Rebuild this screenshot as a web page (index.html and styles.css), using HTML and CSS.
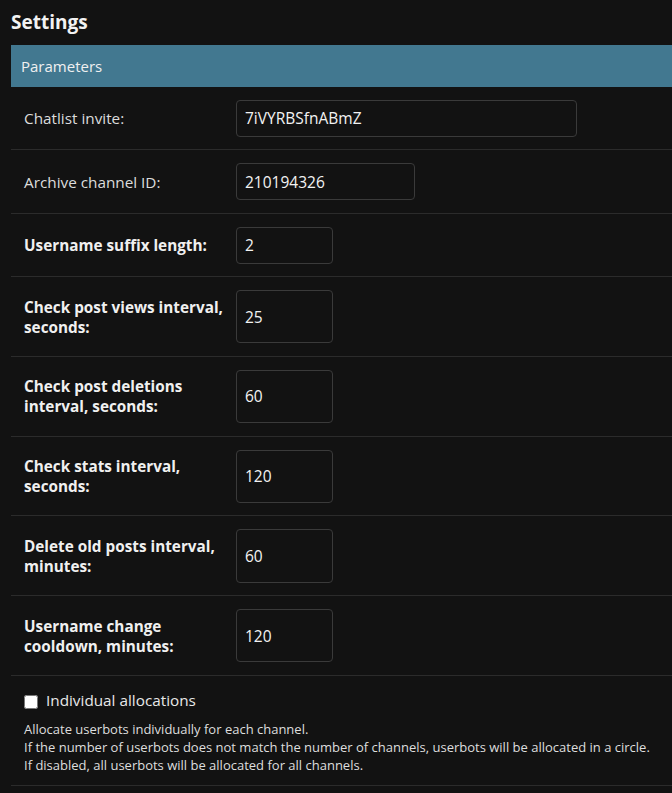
FILE: index.html
```html
<!DOCTYPE html>
<html lang="en">
<head>
<meta charset="utf-8">
<title>Settings</title>
<link rel="stylesheet" href="styles.css">
</head>
<body>
<div class="content">
  <h1 class="title">Settings</h1>
  <fieldset class="module">
    <h2 class="caption">Parameters</h2>
    <div class="form-row">
      <label class="lbl">Chatlist invite:</label>
      <input class="inp w-lg" type="text" value="7iVYRBSfnABmZ">
    </div>
    <div class="form-row">
      <label class="lbl">Archive channel ID:</label>
      <input class="inp w-md" type="text" value="210194326">
    </div>
    <div class="form-row">
      <label class="lbl req">Username suffix length:</label>
      <input class="inp w-sm" type="text" value="2">
    </div>
    <div class="form-row">
      <label class="lbl req">Check post views interval, seconds:</label>
      <input class="inp w-sm" type="text" value="25">
    </div>
    <div class="form-row">
      <label class="lbl req">Check post deletions interval, seconds:</label>
      <input class="inp w-sm" type="text" value="60">
    </div>
    <div class="form-row">
      <label class="lbl req">Check stats interval, seconds:</label>
      <input class="inp w-sm" type="text" value="120">
    </div>
    <div class="form-row">
      <label class="lbl req">Delete old posts interval, minutes:</label>
      <input class="inp w-sm" type="text" value="60">
    </div>
    <div class="form-row">
      <label class="lbl req">Username change cooldown, minutes:</label>
      <input class="inp w-sm" type="text" value="120">
    </div>
    <div class="form-row check-row">
      <div class="check-line">
        <input class="chk" type="checkbox" id="ia">
        <label class="chk-lbl" for="ia">Individual allocations</label>
      </div>
      <div class="help">
        Allocate userbots individually for each channel.<br>
        If the number of userbots does not match the number of channels, userbots will be allocated in a circle.<br>
        If disabled, all userbots will be allocated for all channels.
      </div>
    </div>
  </fieldset>
</div>
</body>
</html>
```
FILE: styles.css
```css
html, body {
  margin: 0;
  padding: 0;
  background: #121212;
  color: #eeeeee;
  font-family: "Open Sans", "Noto Sans", sans-serif;
}

.content {
  padding: 0 0 0 11px;
}

.title {
  margin: 0;
  padding: 9px 0 0 0;
  height: 36px;
  font-size: 19px;
  font-weight: 700;
  line-height: 27px;
  color: #f2f2f2;
}

.module {
  margin: 0;
  padding: 0;
  border: none;
  min-width: 0;
}

.caption {
  margin: 0;
  height: 42px;
  display: flex;
  align-items: center;
  padding: 0 10px;
  background: #427890;
  color: #f0f0f0;
  font-size: 15px;
  font-weight: 400;
}

.form-row {
  display: flex;
  align-items: center;
  padding: 12.8px 0 12.6px 13px;
  border-bottom: 1px solid #2b2b2b;
}

.lbl {
  flex: 0 0 auto;
  width: 200px;
  margin-right: 12px;
  padding: 6.7px 0;
  font-size: 15.3px;
  line-height: 20px;
  color: #dcdcdc;
}

.lbl.req {
  font-weight: 700;
  color: #f0f0f0;
}

.inp {
  align-self: stretch;
  box-sizing: border-box;
  min-height: 37px;
  margin: 0;
  padding: 0 8px;
  background: #121212;
  border: 1px solid #3a3a3a;
  border-radius: 4px;
  color: #f2f2f2;
  font-family: "Open Sans", "Noto Sans", sans-serif;
  font-size: 15.5px;
  outline: none;
}

.w-lg { width: 341px; }
.w-md { width: 179px; }
.w-sm { width: 97px; }

.check-row {
  display: block;
  padding-bottom: 11px;
}

.check-line {
  display: flex;
  align-items: center;
  height: 22px;
}

.chk {
  width: 14px;
  height: 14px;
  margin: 4px 8px 0 0;
}

.chk-lbl {
  font-size: 15.3px;
  color: #e8e8e8;
}

.help {
  margin-top: 9px;
  font-size: 13px;
  line-height: 18px;
  color: #dedede;
}
```
